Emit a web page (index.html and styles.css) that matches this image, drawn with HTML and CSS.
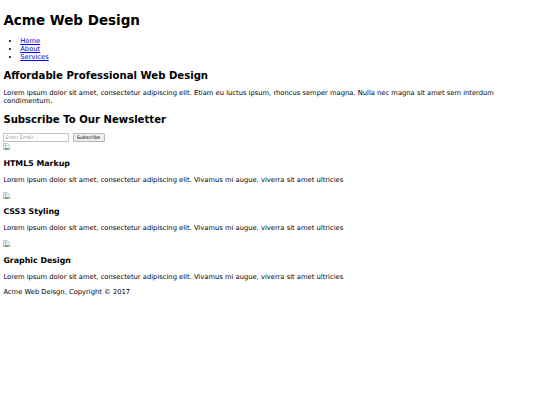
FILE: index.html
```html
<!DOCTYPE html>
<html lang="en">
<head>
<meta charset="utf-8">
<title>Acme Web Design</title>
<link rel="stylesheet" href="styles.css">
</head>
<body>
<header>
  <div class="branding"><h1 class="site-title">Acme Web Design</h1></div>
  <nav>
    <ul class="menu">
      <li><a href="#">Home</a></li>
      <li><a href="#">About</a></li>
      <li><a href="#">Services</a></li>
    </ul>
  </nav>
</header>
<section class="showcase">
  <h2 class="section-title">Affordable Professional Web Design</h2>
  <p>Lorem ipsum dolor sit amet, consectetur adipiscing elit. Etiam eu luctus ipsum, rhoncus semper magna. Nulla nec magna sit amet sem interdum condimentum.</p>
</section>
<section class="newsletter">
  <h2 class="section-title">Subscribe To Our Newsletter</h2>
  <form class="subscribe">
    <input type="email" class="email" placeholder="Enter Email..."> <button type="submit" class="btn">Subscribe</button>
  </form>
</section>
<section class="boxes">
  <div class="box">
    <span class="thumb"><svg viewBox="0 0 8 8" width="7" height="7"><path d="M0.5 0.5h4.5l2.5 2.5v4.5h-7z" fill="#f4f4f4" stroke="#b9b9b9"/><path d="M1 7.5l2-2.5 1.5 1.5 1-1 2 2z" fill="#4b9a3c"/><circle cx="3" cy="3" r="0.9" fill="#5f8ec9"/></svg></span>
    <h3>HTML5 Markup</h3>
    <p>Lorem ipsum dolor sit amet, consectetur adipiscing elit. Vivamus mi augue, viverra sit amet ultricies</p>
  </div>
  <div class="box">
    <span class="thumb"><svg viewBox="0 0 8 8" width="7" height="7"><path d="M0.5 0.5h4.5l2.5 2.5v4.5h-7z" fill="#f4f4f4" stroke="#b9b9b9"/><path d="M1 7.5l2-2.5 1.5 1.5 1-1 2 2z" fill="#4b9a3c"/><circle cx="3" cy="3" r="0.9" fill="#5f8ec9"/></svg></span>
    <h3>CSS3 Styling</h3>
    <p>Lorem ipsum dolor sit amet, consectetur adipiscing elit. Vivamus mi augue, viverra sit amet ultricies</p>
  </div>
  <div class="box">
    <span class="thumb"><svg viewBox="0 0 8 8" width="7" height="7"><path d="M0.5 0.5h4.5l2.5 2.5v4.5h-7z" fill="#f4f4f4" stroke="#b9b9b9"/><path d="M1 7.5l2-2.5 1.5 1.5 1-1 2 2z" fill="#4b9a3c"/><circle cx="3" cy="3" r="0.9" fill="#5f8ec9"/></svg></span>
    <h3>Graphic Design</h3>
    <p>Lorem ipsum dolor sit amet, consectetur adipiscing elit. Vivamus mi augue, viverra sit amet ultricies</p>
  </div>
</section>
<footer>
  <p class="copy">Acme Web Deisgn, Copyright &copy; 2017</p>
</footer>
</body>
</html>
```

FILE: styles.css
```css
/* The whole page is set on a small base size; everything scales from it. */
body {
  margin: 3.375px;
  font-family: "DejaVu Sans", Verdana, sans-serif;
  font-size: 6.75px;
  color: #000;
  background: #fff;
}

.site-title {
  font-size: 2em;
  margin: 0.67em 0;
}

.menu {
  margin: 1em 0;
  padding-left: 2.5em;
}

.menu a {
  color: #0000ee;
}

.section-title {
  font-size: 1.5em;
  margin: 0.83em 0;
}

p {
  margin: 1em 0;
}

.subscribe {
  margin: 0;
  line-height: 1;
}

.email {
  box-sizing: border-box;
  width: 66px;
  height: 9px;
  margin: 0;
  padding: 0 1px;
  border: 1px solid #c4c4c4;
  font-family: inherit;
  font-size: 4.8px;
  vertical-align: top;
}

.email::placeholder {
  color: #9a9a9a;
}

.btn {
  box-sizing: border-box;
  width: 32px;
  height: 9px;
  margin: 0 0 0 1px;
  padding: 0;
  border: 1px solid #b8b8b8;
  border-radius: 1px;
  background: #efefef;
  color: #000;
  font-family: inherit;
  font-size: 4.8px;
  line-height: 7px;
  vertical-align: top;
}

.thumb {
  display: block;
  height: 8px;
  padding-top: 1px;
}

.thumb svg {
  display: block;
}

.box h3 {
  font-size: 1.17em;
  margin: 1em 0;
}

.copy {
  margin: 1em 0;
}
```
